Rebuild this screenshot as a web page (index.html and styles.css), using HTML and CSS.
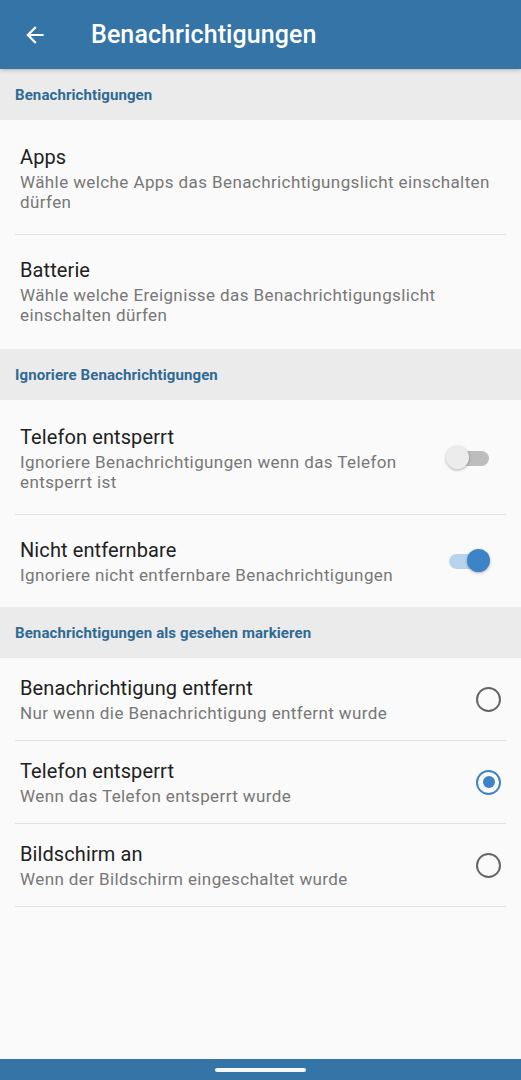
FILE: index.html
```html
<!DOCTYPE html>
<html lang="de">
<head>
  <meta charset="UTF-8" />
  <meta name="viewport" content="width=device-width, initial-scale=1.0" />
  <title>Benachrichtigungen</title>
  <link rel="stylesheet" href="styles.css">
</head>
<body>
  <header class="app-bar">
    <svg class="back-icon" viewBox="0 0 24 24" width="26" height="26">
      <path d="M20 11H7.83l5.59-5.59L12 4l-8 8 8 8 1.41-1.41L7.83 13H20v-2z" fill="#ffffff"/>
    </svg>
    <h1>Benachrichtigungen</h1>
  </header>

  <main class="content">
    <div class="section-title">Benachrichtigungen</div>
    <div class="item">
      <div class="item-text">
        <div class="item-title">Apps</div>
        <div class="item-sub">Wähle welche Apps das Benachrichtigungslicht einschalten dürfen</div>
      </div>
    </div>
    <div class="item last">
      <div class="item-text">
        <div class="item-title">Batterie</div>
        <div class="item-sub">Wähle welche Ereignisse das Benachrichtigungslicht einschalten dürfen</div>
      </div>
    </div>

    <div class="section-title">Ignoriere Benachrichtigungen</div>
    <div class="item">
      <div class="item-text narrow">
        <div class="item-title">Telefon entsperrt</div>
        <div class="item-sub">Ignoriere Benachrichtigungen wenn das Telefon entsperrt ist</div>
      </div>
      <div class="switch"><span class="track"></span><span class="thumb"></span></div>
    </div>
    <div class="item last mid">
      <div class="item-text narrow">
        <div class="item-title">Nicht entfernbare</div>
        <div class="item-sub">Ignoriere nicht entfernbare Benachrichtigungen</div>
      </div>
      <div class="switch on"><span class="track"></span><span class="thumb"></span></div>
    </div>

    <div class="section-title">Benachrichtigungen als gesehen markieren</div>
    <div class="item compact">
      <div class="item-text narrow">
        <div class="item-title">Benachrichtigung entfernt</div>
        <div class="item-sub">Nur wenn die Benachrichtigung entfernt wurde</div>
      </div>
      <div class="radio"></div>
    </div>
    <div class="item compact">
      <div class="item-text narrow">
        <div class="item-title">Telefon entsperrt</div>
        <div class="item-sub">Wenn das Telefon entsperrt wurde</div>
      </div>
      <div class="radio checked"></div>
    </div>
    <div class="item compact">
      <div class="item-text narrow">
        <div class="item-title">Bildschirm an</div>
        <div class="item-sub">Wenn der Bildschirm eingeschaltet wurde</div>
      </div>
      <div class="radio"></div>
    </div>
  </main>

  <footer class="nav-bar">
    <span class="nav-pill"></span>
  </footer>
</body>
</html>
```

FILE: styles.css
```css
:root {
  --primary: #3574a6;
  --accent: #3d84c6;
  --header-bg: #ebebeb;
  --header-text: #2f6a94;
  --bg: #fafafa;
  --divider: #e0e0e0;
}
* {
  margin: 0;
  padding: 0;
  box-sizing: border-box;
}
html, body {
  height: 100%;
}
body {
  background: var(--bg);
  font-family: Roboto, 'Noto Sans', sans-serif;
  display: flex;
  flex-direction: column;
  min-height: 1080px;
}
.app-bar {
  height: 69px;
  background: var(--primary);
  display: flex;
  align-items: center;
  padding-left: 22px;
  box-shadow: 0 1px 4px rgba(0, 0, 0, 0.25);
  position: relative;
  z-index: 1;
}
.back-icon {
  display: block;
}
.app-bar h1 {
  margin-left: 43px;
  color: #ffffff;
  font-size: 25px;
  font-weight: 500;
  letter-spacing: 0.1px;
}
.content {
  flex: 1;
}
.section-title {
  height: 51px;
  background: var(--header-bg);
  color: var(--header-text);
  font-size: 15px;
  font-weight: 700;
  letter-spacing: 0.1px;
  padding-left: 15px;
  display: flex;
  align-items: center;
}
.item {
  display: flex;
  align-items: center;
  margin: 0 15px 0 15px;
  padding: 24px 0 22px 5px;
  border-bottom: 1px solid var(--divider);
}
.item.last {
  border-bottom: none;
  padding: 22px 0 24px 5px;
}
.item.mid {
  padding: 22px 0 22px 5px;
}
.item.compact {
  padding: 17px 0 17px 5px;
}
.item-text {
  flex: 1;
  min-width: 0;
}
.item-text.narrow {
  padding-right: 36px;
}
.item-title {
  font-size: 20px;
  line-height: 26px;
  letter-spacing: 0.1px;
  color: #212121;
}
.item-sub {
  margin-top: 2px;
  font-size: 17px;
  line-height: 20px;
  letter-spacing: 0.4px;
  color: #777777;
}
.switch {
  position: relative;
  width: 44px;
  height: 26px;
  margin-right: 16px;
  flex-shrink: 0;
}
.switch .track {
  position: absolute;
  left: 6px;
  right: 1px;
  top: 6px;
  height: 15px;
  border-radius: 8px;
  background: #bdbdbd;
}
.switch .thumb {
  position: absolute;
  left: 0;
  top: 1px;
  width: 23px;
  height: 23px;
  border-radius: 50%;
  background: #ececec;
  box-shadow: 0 1px 3px rgba(0, 0, 0, 0.3);
}
.switch.on .track {
  background: #b8d4ec;
  left: 3px;
  right: 4px;
}
.switch.on .thumb {
  left: auto;
  right: 0;
  background: var(--accent);
}
.radio {
  width: 25px;
  height: 25px;
  border: 2px solid #666666;
  border-radius: 50%;
  margin-right: 5px;
  flex-shrink: 0;
  display: flex;
  align-items: center;
  justify-content: center;
}
.radio.checked {
  border-color: var(--accent);
}
.radio.checked::after {
  content: "";
  width: 12px;
  height: 12px;
  border-radius: 50%;
  background: var(--accent);
}
.nav-bar {
  height: 21px;
  background: var(--primary);
  display: flex;
  justify-content: center;
  align-items: center;
}
.nav-pill {
  width: 91px;
  height: 4px;
  border-radius: 2px;
  background: #f4f8fb;
}
```
